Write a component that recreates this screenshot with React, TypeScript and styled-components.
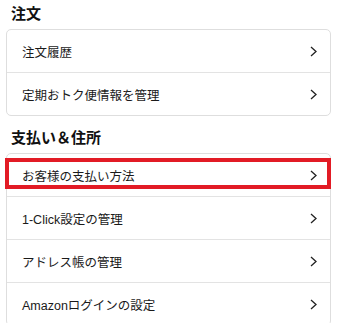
import styled, { createGlobalStyle } from 'styled-components'

const GlobalStyle = createGlobalStyle`
  body {
    margin: 0;
    background: #fff;
    font-family: "Liberation Sans", "Noto Sans CJK JP", sans-serif;
    color: #111;
  }
`

const Page = styled.div`
  padding: 4px 9px 0 6px;
`

const Section = styled.section`
  & + & {
    margin-top: 12px;
  }
`

const Heading = styled.h2`
  margin: 0 0 5px 5px;
  font-size: 15px;
  line-height: 20px;
  font-weight: 700;
  color: #111;
`

const Card = styled.div`
  border: 1px solid #dedede;
  border-radius: 5px;
  background: #fff;
`

const Row = styled.div`
  position: relative;
  display: flex;
  align-items: center;
  justify-content: space-between;
  height: 42px;
  padding: 0 13px 0 15px;
  font-size: 12.5px;
  color: #1a1a1a;

  & + & {
    border-top: 1px solid #e3e3e3;
  }
`

const Highlight = styled.div`
  position: absolute;
  left: -2px;
  right: -1px;
  top: 4px;
  height: 31px;
  border: 4px solid #e21b25;
  box-sizing: border-box;
  pointer-events: none;
`

const Chevron = () => (
  <svg width="7" height="11" viewBox="0 0 7 11">
    <polyline points="1,1 6,5.5 1,10" fill="none" stroke="#222" strokeWidth="1.3" />
  </svg>
)

const orders = ['注文履歴', '定期おトク便情報を管理']
const payments = ['お客様の支払い方法', '1-Click設定の管理', 'アドレス帳の管理', 'Amazonログインの設定']

export default function App() {
  return (
    <>
      <GlobalStyle />
      <Page>
        <Section>
          <Heading>注文</Heading>
          <Card>
            {orders.map((label) => (
              <Row key={label}>
                <span>{label}</span>
                <Chevron />
              </Row>
            ))}
          </Card>
        </Section>
        <Section>
          <Heading>支払い＆住所</Heading>
          <Card>
            {payments.map((label, i) => (
              <Row key={label}>
                {i === 0 && <Highlight />}
                <span>{label}</span>
                <Chevron />
              </Row>
            ))}
          </Card>
        </Section>
      </Page>
    </>
  )
}
